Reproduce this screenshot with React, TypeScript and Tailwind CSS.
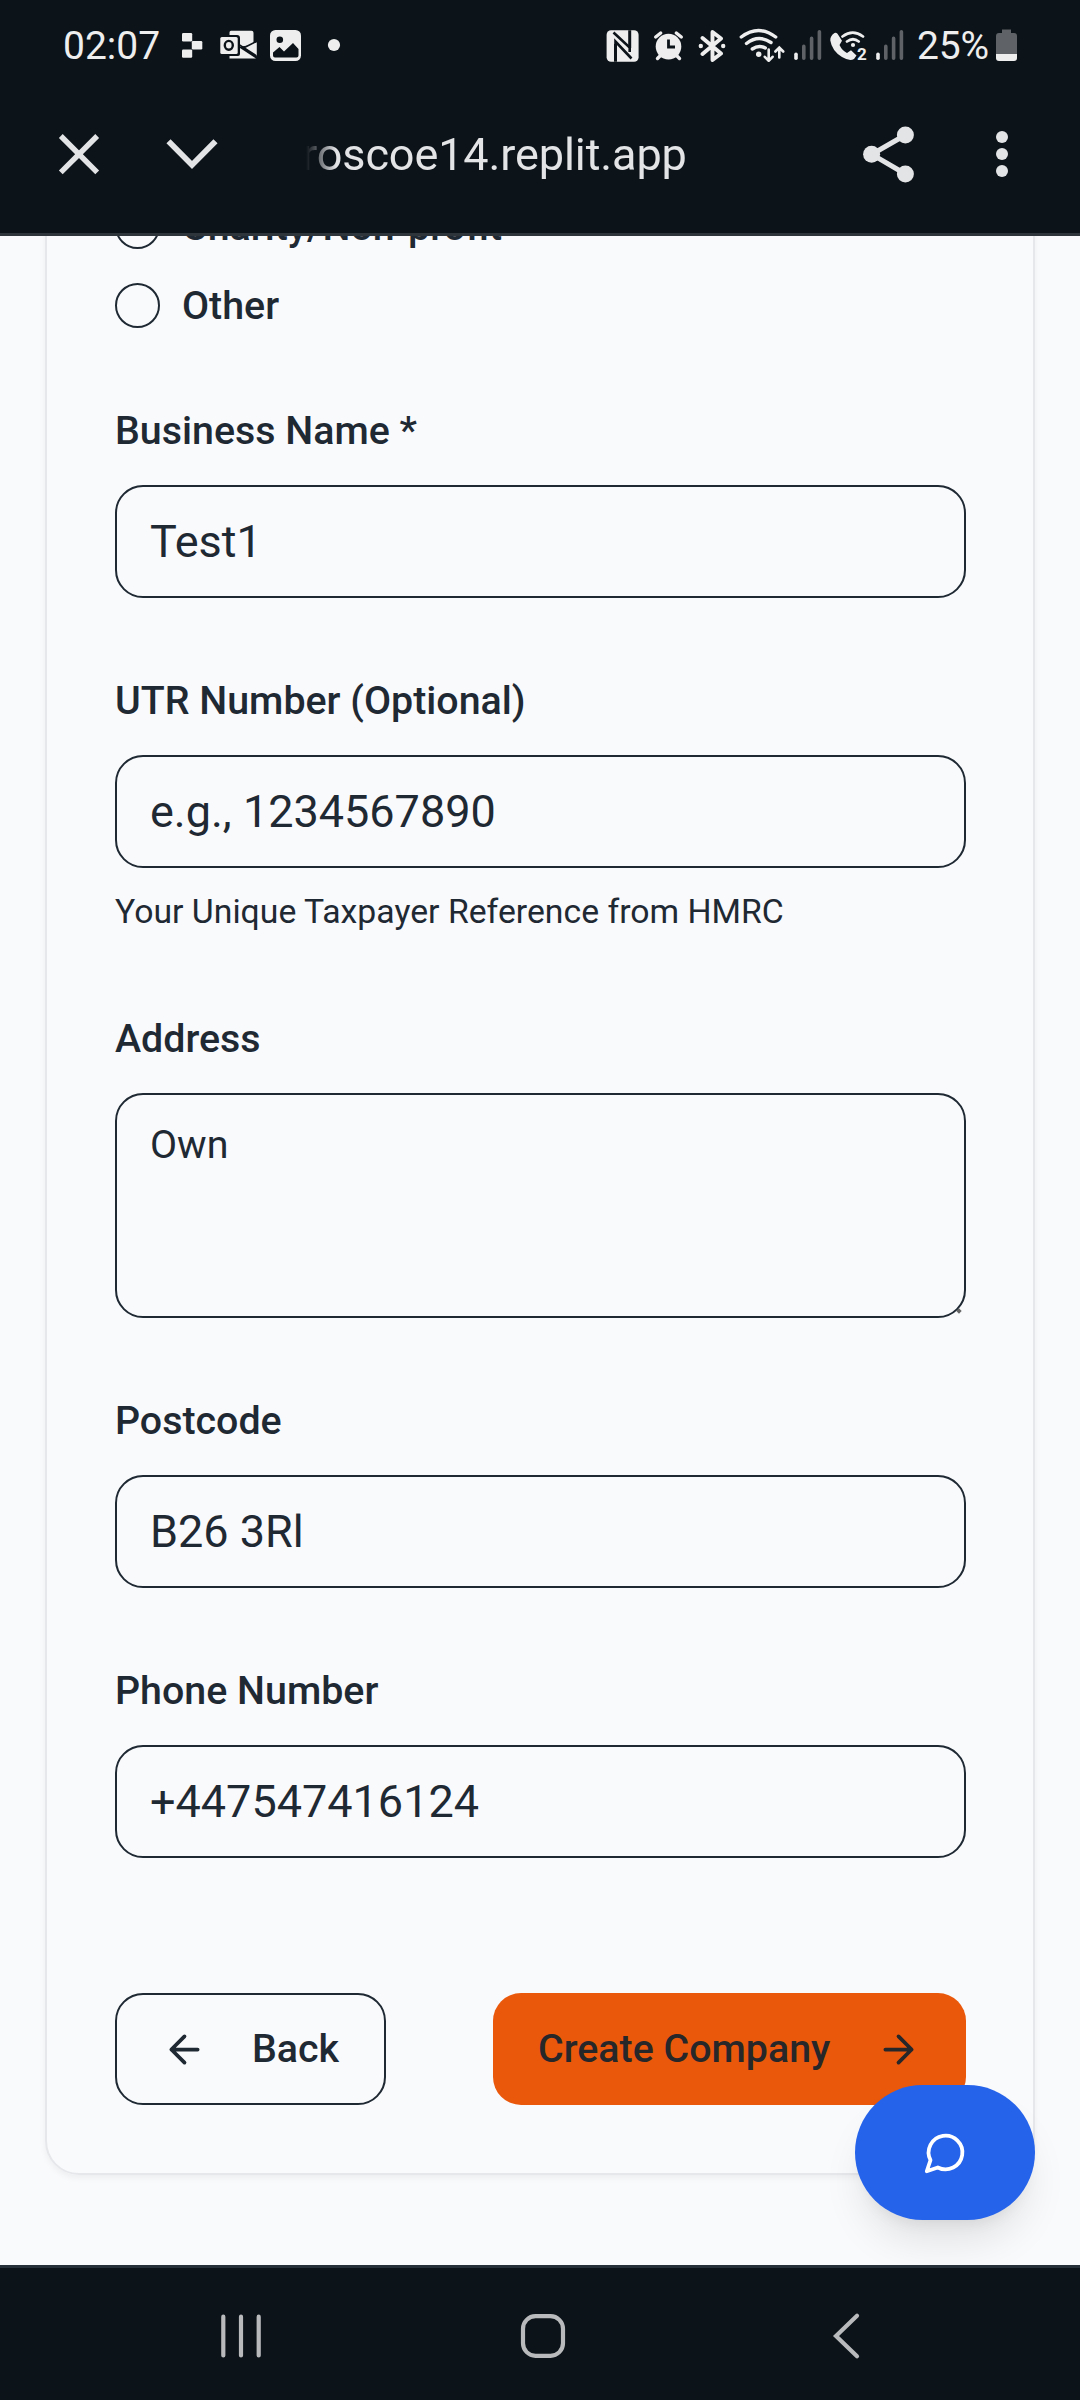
import type { ReactNode } from "react";

const LIGHT = "#eeeeee";
const DIM = "#5f6367";

function Icon({ box, w, h, className, children }: { box: string; w: number; h: number; className?: string; children: ReactNode }) {
  return (
    <svg viewBox={box} width={w} height={h} fill="none" className={"shrink-0 " + (className ?? "")} aria-hidden="true">
      {children}
    </svg>
  );
}

function SignalBars({ className }: { className: string }) {
  return (
    <Icon box="0 0 28 34" w={28} h={34} className={className}>
      <g strokeWidth="3.6" strokeLinecap="round">
        <path d="M2 26.2V30.2" stroke={LIGHT} />
        <path d="M9.8 18.4V30.2M17.6 10.4V30.2M25.4 3.8V30.2" stroke={DIM} />
      </g>
    </Icon>
  );
}

function StatusBar() {
  return (
    <div className="flex h-[90px] items-start pt-7 text-[39px] leading-[36px] text-[#eeeeee]">
      <span className="ml-[63px] w-[97px] whitespace-nowrap">02:07</span>

      <Icon box="180 28 24 34" w={24} h={34} className="ml-5">
        <g fill={LIGHT}>
          <rect x="182" y="33" width="10.2" height="8.4" rx="1.2" />
          <rect x="191.8" y="41" width="10.5" height="8.4" rx="1.2" />
          <rect x="182" y="49.4" width="10.2" height="8.4" rx="1.2" />
        </g>
      </Icon>

      <Icon box="220 28 38 34" w={38} h={34} className="ml-4">
        <path d="M231 30.800h20.500q2 0 2 2V45l-13.500 1.500v-8.500q0-3-3-3h-7.500v-2.500q0-1.700 1.500-1.700z" fill={LIGHT} />
        <path d="M256.800 42v14.200L244 47.200z" fill={LIGHT} />
        <path d="M240 48l16 10.600H229.500V56H238q2 0 2-2z" fill={LIGHT} />
        <path d="M239.500 44.800L256.500 55.800M257 41.200L243.500 48" stroke="#0c1319" strokeWidth="1.600" />
        <rect x="220.300" y="37" width="17.400" height="17" rx="1.500" fill={LIGHT} />
        <ellipse cx="228.800" cy="45.300" rx="4" ry="4.400" stroke="#0c1319" strokeWidth="2.400" />
      </Icon>

      <Icon box="268 28 35 34" w={35} h={34} className="ml-[10px]">
        <rect x="270" y="30" width="31" height="31" rx="5.500" fill={LIGHT} />
        <circle cx="279.800" cy="39.800" r="3.300" fill="#0c1319" />
        <path d="M273 52.500l6.500-5.500 4.500 4.500 9-8.500 5.500 6v6.500q0 2-2 2H275q-2 0-2-2z" fill="#0c1319" />
      </Icon>

      <Icon box="326 28 16 34" w={16} h={34} className="ml-[23px]">
        <circle cx="334" cy="45" r="6.100" fill={LIGHT} />
      </Icon>

      <Icon box="606 28 34 34" w={34} h={34} className="ml-[264px]">
        <rect x="606.600" y="30.300" width="32" height="31.400" rx="4.500" fill={LIGHT} />
        <path d="M615.500 61.700V44M629.700 30.300V48" stroke="#0c1319" strokeWidth="3" />
        <path d="M613.500 32.500L629.700 47.500V52M615.500 44V41.500L631.500 58.500" stroke="#0c1319" strokeWidth="2.600" />
      </Icon>

      <Icon box="653 28 32 34" w={32} h={34} className="ml-[13px]">
        <circle cx="668.500" cy="46.600" r="12.800" fill={LIGHT} />
        <path d="M655.700 37l5-4M681.300 37l-5-4M657.500 58.500l3-3M679.500 58.500l-3-3" stroke={LIGHT} strokeWidth="3.400" strokeLinecap="round" />
        <path d="M668.500 39.500v7.500h6.500" stroke="#0c1319" strokeWidth="2.800" />
      </Icon>

      <Icon box="697 28 30 34" w={30} h={34} className="ml-3">
        <path d="M702.500 38L721 53.500 712.500 60V32l8.500 6.500L702.500 54" stroke={LIGHT} strokeWidth="3.900" strokeLinecap="round" strokeLinejoin="round" />
        <circle cx="700.800" cy="46" r="2.200" fill={LIGHT} />
        <circle cx="723.200" cy="46" r="2.200" fill={LIGHT} />
      </Icon>

      <Icon box="738 28 48 34" w={48} h={34} className="ml-[11px]">
        <g stroke={LIGHT} strokeWidth="3.400" strokeLinecap="round">
          <path d="M741.300 37q17.200-13 34.400 0M746.500 43.500q12-9.500 24.500-1M752.300 49q6.500-4.500 13-1" />
        </g>
        <circle cx="758.700" cy="54.200" r="2.700" fill={LIGHT} />
        <path d="M768.700 49.500v11M764.800 56.800l3.900 4 3.900-4M779.300 57.500v-9.500M775.400 51.500l3.900-4 3.900 4" stroke={LIGHT} strokeWidth="2.600" strokeLinecap="round" />
      </Icon>

      <SignalBars className="ml-2" />

      <div className="relative ml-[7px] h-[34px] w-[40px] shrink-0">
        <Icon box="829 28 40 34" w={40} h={34}>
          <path d="M834.500 33q-4.500 3-4.200 7.500Q832 51 842 57q7.500 4.500 12 2l2.500-3.500-5.500-5.200-4 2.700q-5-2.500-7.500-8l2.500-4.200-4.500-7q-1.500-1.800-3-.8z" fill={LIGHT} />
          <path d="M842.500 36.500q10.200-7.800 20.500 0M847 41.500q6-4.500 11.700 0" stroke={LIGHT} strokeWidth="2.700" strokeLinecap="round" />
          <circle cx="853" cy="45" r="2.100" fill={LIGHT} />
        </Icon>
        <span className="absolute left-[28px] top-[17px] text-[17px] font-bold leading-[18px]">2</span>
      </div>

      <SignalBars className="ml-[7px]" />

      <span className="ml-[13px] w-[74px] whitespace-nowrap tracking-[-0.2px]">25%</span>

      <Icon box="994 28 26 34" w={26} h={34} className="ml-[3px]">
        <path d="M1002 29.500h9v3.500h3q3 0 3 3V54H996V36q0-3 3-3h3z" fill={DIM} />
        <path d="M996 54h21v4q0 3-3 3h-15q-3 0-3-3z" fill={LIGHT} />
      </Icon>
    </div>
  );
}

function BrowserBar() {
  return (
    <div className="flex h-[128px] items-center text-[#e3e4e6]">
      <Icon box="56 131 46 46" w={46} h={46} className="ml-14">
        <path d="M60.800 136L97.200 172.400M97.200 136L60.800 172.400" stroke="currentColor" strokeWidth="5.400" />
      </Icon>
      <Icon box="162 131 60 46" w={60} h={46} className="ml-[60px]">
        <path d="M168.500 141.300L192 165l23.500-23.700" stroke="currentColor" strokeWidth="5.800" />
      </Icon>
      <div className="ml-[80px] mt-[2px] w-[400px] whitespace-nowrap text-[45px] leading-[56px] tracking-[-0.1px] [mask-image:linear-gradient(to_right,transparent_4px,black_34px)]">
        roscoe14.replit.app
      </div>
      <Icon box="860 124 58 60" w={58} h={60} className="ml-[158px]">
        <path d="M905.400 135L871.800 154.300L905.400 174" stroke="currentColor" strokeWidth="5" />
        <circle cx="905.400" cy="135" r="8.500" fill="currentColor" />
        <circle cx="871.600" cy="154.300" r="8.500" fill="currentColor" />
        <circle cx="905.400" cy="174" r="8.500" fill="currentColor" />
      </Icon>
      <Icon box="994 124 16 60" w={16} h={60} className="ml-[76px]">
        <circle cx="1002" cy="137" r="6" fill="currentColor" />
        <circle cx="1002" cy="154" r="6" fill="currentColor" />
        <circle cx="1002" cy="171" r="6" fill="currentColor" />
      </Icon>
    </div>
  );
}

function RadioRow({ label }: { label: string }) {
  return (
    <div className="flex h-[45px] items-center gap-[22px]">
      <span className="size-[45px] shrink-0 rounded-full border-2 border-[#1f2933]" />
      <span className="text-[39.375px] font-medium leading-[40px]">{label}</span>
    </div>
  );
}

function Field({ label, value, hint }: { label: string; value: string; hint?: string }) {
  return (
    <div className="mt-[82px] flex flex-col">
      <span className="pt-px text-[39.375px] font-medium leading-[40px]">{label}</span>
      <div className="mt-[34px] flex h-[113px] items-center rounded-[28px] border-2 border-[#1f2933] px-[33px] text-[45px]">
        {value}
      </div>
      {hint && <span className="mt-[24px] mb-[4px] text-[33.75px] leading-[40px]">{hint}</span>}
    </div>
  );
}

function CompanyForm() {
  return (
    <div className="relative mx-[45px] -mt-[63px] h-[2002px] rounded-[34px] border-2 border-[#e5e7ea] pl-[68px] pr-[67px] pt-[28px] shadow-[0_3px_6px_rgba(0,0,0,0.05)]">
      <div className="flex flex-col gap-[34px] pt-px">
        <RadioRow label="Charity/Non-profit" />
        <RadioRow label="Other" />
      </div>
      <Field label="Business Name *" value="Test1" />
      <Field label="UTR Number (Optional)" value="e.g., 1234567890" hint="Your Unique Taxpayer Reference from HMRC" />
      <div className="mt-[82px] flex flex-col">
        <span className="pt-px text-[39.375px] font-medium leading-[40px]">Address</span>
        <div className="relative mt-[34px] h-[225px] rounded-[28px] border-2 border-[#1f2933] px-[33px] pt-[22px] text-[39.375px] leading-[56px]">
          Own
          <svg viewBox="0 0 6 6" className="absolute bottom-[2px] right-[2px] size-[6px]" aria-hidden="true">
            <path d="M3 0.300L5.700 3L3 5.700L0.300 3z" fill="#666" />
          </svg>
        </div>
      </div>
      <Field label="Postcode" value="B26 3Rl" />
      <Field label="Phone Number" value="+447547416124" />
      <div className="mt-[135px] flex justify-between text-[39.375px] font-medium leading-[40px]">
        <button className="flex h-[112px] w-[271px] items-center rounded-[28px] border-2 border-[#1f2933] pl-[45px]">
          <svg viewBox="0 0 24 24" className="size-[45px]" fill="none" stroke="currentColor" strokeWidth="2" strokeLinecap="round" strokeLinejoin="round">
            <path d="m12 19-7-7 7-7M19 12H5" />
          </svg>
          <span className="ml-[45px]">Back</span>
        </button>
        <button className="flex h-[112px] w-[473px] items-center justify-between rounded-[28px] bg-[#ea580c] px-[45px] text-[#27272a]">
          <span>Create Company</span>
          <svg viewBox="0 0 24 24" className="size-[45px]" fill="none" stroke="currentColor" strokeWidth="2" strokeLinecap="round" strokeLinejoin="round">
            <path d="M5 12h14M12 5l7 7-7 7" />
          </svg>
        </button>
      </div>
    </div>
  );
}

function NavBar() {
  return (
    <div className="flex h-[135px] items-center border-t-[3px] border-[#263038] bg-[#0c1319] text-[#b8babb]">
      <Icon box="215 2306 52 60" w={52} h={60} className="ml-[215px] mt-[3px]">
        <path d="M223.300 2316.700V2355.500M241 2316.700V2355.500M258.700 2316.700V2355.500" stroke="currentColor" strokeWidth="4.200" strokeLinecap="round" />
      </Icon>
      <Icon box="515 2306 56 60" w={56} h={60} className="ml-[248px] mt-[3px]">
        <rect x="523" y="2316.200" width="40" height="39.600" rx="12.500" stroke="currentColor" strokeWidth="4.200" />
      </Icon>
      <Icon box="826 2306 40 60" w={40} h={60} className="ml-[255px] mt-[3px]">
        <path d="M857 2315.700L836 2336L857 2356.300" stroke="currentColor" strokeWidth="4.200" strokeLinecap="round" />
      </Icon>
    </div>
  );
}

export default function App() {
  return (
    <div className="flex h-[2400px] w-[1080px] flex-col overflow-hidden bg-[#0c1319] font-[Roboto,sans-serif] text-[#1f2933]">
      <header className="h-[236px] shrink-0 border-b-[3px] border-[#2f363b] bg-[#0c1319]">
        <StatusBar />
        <BrowserBar />
      </header>
      <main className="relative h-[2029px] shrink-0 overflow-hidden bg-[#f9fafc]">
        <div className="flow-root">
          <CompanyForm />
        </div>
        <button className="absolute bottom-[45px] right-[45px] flex h-[135px] w-[180px] items-center justify-center rounded-full bg-[#2563eb] text-white shadow-[0_28px_42px_-8px_rgba(0,0,0,0.1),0_11px_17px_-11px_rgba(0,0,0,0.1)]">
          <svg viewBox="0 0 24 24" className="size-[45px]" fill="none" stroke="currentColor" strokeWidth="2" strokeLinecap="round" strokeLinejoin="round">
            <path d="M7.9 20A9 9 0 1 0 4 16.1L2 22Z" />
          </svg>
        </button>
      </main>
      <NavBar />
    </div>
  );
}
